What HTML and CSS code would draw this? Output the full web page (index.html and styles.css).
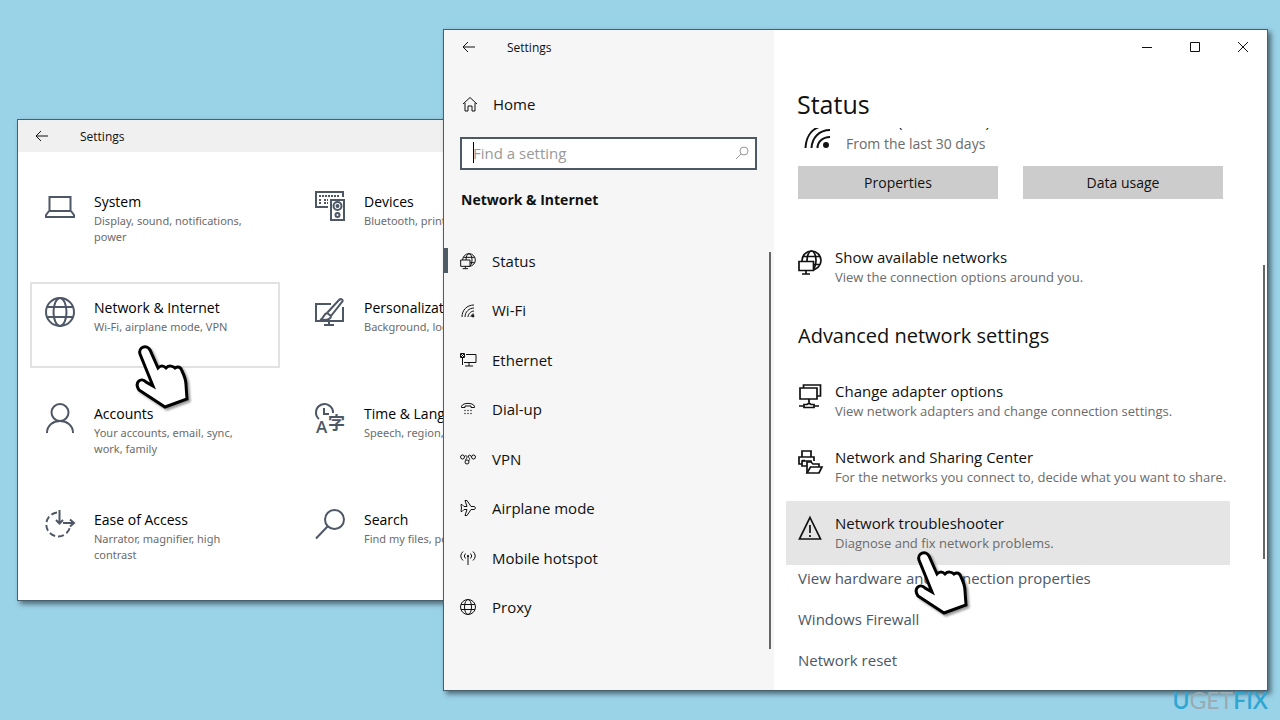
FILE: index.html
```html
<!DOCTYPE html>
<html lang="en">
  <head>
    <meta charset="utf-8">
    <title>Settings - Network troubleshooter</title>
    <link rel="stylesheet" href="styles.css">
  </head>

  <body>
    <div class="desktop">

      <!-- Settings home -->
      <section class="window window-home">
        <header class="titlebar">
          <button class="back" aria-label="Back"><svg width="14" height="12" viewBox="0 0 14 12"><path d="M13 6H1M6 1L1 6l5 5"/></svg></button>
          <span>Settings</span>
        </header>
        <div class="tiles">
          <a href="#" class="tile">
            <svg class="tile-icon" viewBox="0 0 30 30"><path d="M4.500 6h21v14h-21zM4 20l-3 4v2h28v-2l-3-4"/></svg>
            <span class="tile-text"><span class="tile-title">System</span><span class="tile-sub">Display, sound, notifications, power</span></span>
          </a>
          <a href="#" class="tile">
            <svg class="tile-icon" viewBox="0 0 30 30"><path d="M13 16H1V1h27v5M16 9h13v20H16z"/><path d="M4 5h21M4 9h3M9 9h4M4 12h3M9 12h4" stroke-dasharray="2 1"/><circle cx="22.500" cy="15" r="4"/><circle cx="22.500" cy="15" r="1"/><circle cx="22.500" cy="24" r="2"/></svg>
            <span class="tile-text"><span class="tile-title">Devices</span><span class="tile-sub">Bluetooth, printers, mouse</span></span>
          </a>
          <a href="#" class="tile tile-hover">
            <svg class="tile-icon" viewBox="0 0 30 30"><circle cx="15" cy="15" r="14"/><ellipse cx="15" cy="15" rx="6.500" ry="14"/><path d="M2 10h26M2 20h26"/></svg>
            <span class="tile-text"><span class="tile-title">Network &amp; Internet</span><span class="tile-sub">Wi-Fi, airplane mode, VPN</span></span>
            <svg class="hand hand-tile" width="58" height="70" viewBox="0 0 58 70"><path d="M18 41L5 9C3 2 12-1 15 5l8 18c3-3 6-2 8 0 3-3 7-2 9 0 3-2 6-1 7 3 2 4 4 9 4 14l1 14-22 8L4 45C-1 37 6 32 11 37z"/></svg>
          </a>
          <a href="#" class="tile">
            <svg class="tile-icon" viewBox="0 0 30 30"><path d="M16 7H1v17h27V10M14 24v4M9 28h10"/><path d="M12 16L24 3c2-2 5 0 3 2L16 19M12 16l4 3c0 4-5 4-11 4 4-1 3-6 7-7z"/></svg>
            <span class="tile-text"><span class="tile-title">Personalization</span><span class="tile-sub">Background, lock screen</span></span>
          </a>
          <a href="#" class="tile">
            <svg class="tile-icon" viewBox="0 0 30 30"><circle cx="15" cy="9.500" r="8.500"/><path d="M2 30c0-16 26-16 26 0"/></svg>
            <span class="tile-text"><span class="tile-title">Accounts</span><span class="tile-sub">Your accounts, email, sync, work, family</span></span>
          </a>
          <a href="#" class="tile">
            <svg class="tile-icon" viewBox="0 0 30 30"><path d="M4 16A8.500 8.500 0 1 1 18 10M9 5v6h5"/><text x="1" y="30" class="glyph">A</text><text x="13" y="26" class="glyph glyph-cjk">字</text></svg>
            <span class="tile-text"><span class="tile-title">Time &amp; Language</span><span class="tile-sub">Speech, region, date</span></span>
          </a>
          <a href="#" class="tile">
            <svg class="tile-icon" viewBox="0 0 30 30"><path d="M12 3.500A12 12 0 1 0 25 18" stroke-dasharray="6 3"/><path d="M14.500 1v13M11 11l3.500 3.500L18 11M18 14h11M25 10.500l4 3.500-4 3.500"/></svg>
            <span class="tile-text"><span class="tile-title">Ease of Access</span><span class="tile-sub">Narrator, magnifier, high contrast</span></span>
          </a>
          <a href="#" class="tile">
            <svg class="tile-icon" viewBox="0 0 30 30"><circle cx="19.500" cy="10.500" r="9.500"/><path d="M12.500 17.500L1 29.500"/></svg>
            <span class="tile-text"><span class="tile-title">Search</span><span class="tile-sub">Find my files, permissions</span></span>
          </a>
        </div>
      </section>

      <!-- Network & Internet -->
      <section class="window window-network">
        <aside class="sidebar">
          <header class="titlebar">
            <button class="back" aria-label="Back"><svg width="14" height="12" viewBox="0 0 14 12"><path d="M13 6H1M6 1L1 6l5 5"/></svg></button>
            <span>Settings</span>
          </header>
          <a href="#" class="home">
            <svg class="nav-icon" viewBox="0 0 16 16"><path d="M1 8l7-6.500L15 8M3 7v8h3v-5h4v5h3V7"/></svg>
            Home
          </a>
          <div class="search">
            <input type="text" class="search-input" placeholder="Find a setting" aria-label="Find a setting">
            <span class="caret"></span>
            <svg class="search-icon" width="14" height="14" viewBox="0 0 14 14"><circle cx="9" cy="5" r="4"/><path d="M6 8l-5 5"/></svg>
          </div>
          <h2 class="side-title">Network &amp; Internet</h2>
          <nav class="nav">
            <a href="#" class="nav-item active"><svg class="nav-icon globe" viewBox="0 0 24 24"><circle cx="13.500" cy="10.500" r="9.500"/><ellipse cx="13.500" cy="10.500" rx="4.500" ry="9.500"/><path d="M5 6.500h17M4 14.500h18"/><path class="solid" d="M1 10.500h14v9.500H1z"/><path d="M8 20v3M4 23.500h8"/></svg>Status</a>
            <a href="#" class="nav-item"><svg class="nav-icon" viewBox="0 0 16 16"><path d="M2 15C2 8 7 3 14 3M5 15c0-5 4-9 9-9M8 15c0-3 3-6 6-6M11 15c0-2 1-3 3-3"/><circle class="dot" cx="13" cy="14" r="1"/></svg>Wi-Fi</a>
            <a href="#" class="nav-item"><svg class="nav-icon" viewBox="0 0 16 16"><path d="M6 2.500h10v8H4M.500 1.500h4v4h-4zM2.500 6v7M9 11v3M5 14h8M1 2l3 3M4 2L1 5"/></svg>Ethernet</a>
            <a href="#" class="nav-item"><svg class="nav-icon" viewBox="0 0 16 16"><path d="M1.500 6.500c-1-5.500 14-5.500 13 0h-3.500V5H5v1.500z"/><g class="dots"><circle cx="5" cy="9.500" r=".7"/><circle cx="8" cy="9.500" r=".7"/><circle cx="11" cy="9.500" r=".7"/><circle cx="5" cy="12.500" r=".7"/><circle cx="8" cy="12.500" r=".7"/><circle cx="11" cy="12.500" r=".7"/></g></svg>Dial-up</a>
            <a href="#" class="nav-item"><svg class="nav-icon" viewBox="0 0 16 16"><circle cx="2.500" cy="6" r="2"/><circle cx="13.500" cy="6" r="2"/><circle cx="7" cy="11" r="2"/><path d="M4.500 5.500c2-2 4 0 1 3.500M11.500 6c-1-3-4-2-3 0s2 2 0 4"/></svg>VPN</a>
            <a href="#" class="nav-item"><svg class="nav-icon" viewBox="0 0 16 16"><path d="M1 4.500h1l2 2h3L5 .500h2l4 6h3.500q2 1.500 0 3H11l-4 6H5l2-6H4l-2 2H1L1.500 8z"/></svg>Airplane mode</a>
            <a href="#" class="nav-item"><svg class="nav-icon" viewBox="0 0 16 16"><path d="M3 1.500Q-1.500 6 3 10.500M5.500 3.500Q3 6 5.500 8.500M13 1.500q4.500 4.500 0 9M10.500 3.500q2.500 2.500 0 5M8 6v9"/><circle class="dot" cx="8" cy="6" r=".7"/></svg>Mobile hotspot</a>
            <a href="#" class="nav-item"><svg class="nav-icon" viewBox="0 0 16 16"><circle cx="8" cy="8" r="7.500"/><ellipse cx="8" cy="8" rx="3.500" ry="7.500"/><path d="M1 5.500h14M1 10.500h14"/></svg>Proxy</a>
          </nav>
        </aside>

        <main class="content">
          <div class="controls">
            <button aria-label="Minimize"><svg width="12" height="12" viewBox="0 0 12 12"><path d="M1 6.500h10"/></svg></button>
            <button aria-label="Maximize"><svg width="12" height="12" viewBox="0 0 12 12"><path d="M1.500 1.500h9v9h-9z"/></svg></button>
            <button aria-label="Close"><svg width="12" height="12" viewBox="0 0 12 12"><path d="M1 1l10 10M11 1L1 11"/></svg></button>
          </div>
          <div class="panel">
            <h1 class="page-title">Status</h1>
            <div class="usage">
              <svg class="usage-icon" width="26" height="26" viewBox="0 0 26 26"><path d="M1.500 23C2 14 6 5 15 2M7.500 23C8 13 15 5 26 5M13.500 23c0-6 5-11 12.500-11"/><circle class="dot" cx="22" cy="20" r="2"/></svg>
              <div>
                <div class="usage-name"><span>(</span><span>)</span></div>
                <div class="usage-period">From the last 30 days</div>
              </div>
            </div>
            <div class="actions">
              <button class="action">Properties</button>
              <button class="action">Data usage</button>
            </div>
            <a href="#" class="row row-networks">
              <svg class="row-icon" viewBox="0 0 24 24"><circle cx="13.500" cy="10.500" r="9.500"/><ellipse cx="13.500" cy="10.500" rx="4.500" ry="9.500"/><path d="M5 6.500h17M4 14.500h18"/><path class="solid" d="M1 11.500h14.500v9H1z"/><path d="M8 20.500v3M4 24h8"/></svg>
              <span><span class="row-title">Show available networks</span><span class="row-sub">View the connection options around you.</span></span>
            </a>
            <h2 class="section-title">Advanced network settings</h2>
            <div class="rows">
              <a href="#" class="row">
                <svg class="row-icon" viewBox="0 0 24 24"><path d="M5.500 4V1h17v11H19M2 4h17v11H2zM11 15v4M1 22h5M16 22h5M6 23.500v-3h3L11 19l2 1.500h3v3z"/></svg>
                <span><span class="row-title">Change adapter options</span><span class="row-sub">View network adapters and change connection settings.</span></span>
              </a>
              <a href="#" class="row">
                <svg class="row-icon" viewBox="0 0 24 24"><path d="M4 7V1h9v6M4 14H1V7h15v4M4 10.500h3"/><path d="M4 11h9v5H4z"/><path class="solid" d="M9 23V12h4l2 2h6v3"/><path class="solid" d="M9 23l3.500-6H24l-3 6z"/></svg>
                <span><span class="row-title">Network and Sharing Center</span><span class="row-sub">For the networks you connect to, decide what you want to share.</span></span>
              </a>
              <a href="#" class="row row-hover">
                <svg class="row-icon" viewBox="0 0 24 24"><path d="M12 1.500L22.500 23h-21zM12 9v8M12 19v2"/></svg>
                <span><span class="row-title">Network troubleshooter</span><span class="row-sub">Diagnose and fix network problems.</span></span>
                <svg class="hand hand-row" width="58" height="70" viewBox="0 0 58 70"><path d="M18 41L5 9C3 2 12-1 15 5l8 18c3-3 6-2 8 0 3-3 7-2 9 0 3-2 6-1 7 3 2 4 4 9 4 14l1 14-22 8L4 45C-1 37 6 32 11 37z"/></svg>
              </a>
            </div>
            <div class="links">
              <a href="#">View hardware and connection properties</a>
              <a href="#">Windows Firewall</a>
              <a href="#">Network reset</a>
            </div>
          </div>
        </main>
      </section>

      <div class="logo">U<span class="logo-mid">GET</span>FIX</div>
    </div>
  </body>
</html>
```
FILE: styles.css
```css
* {
  box-sizing: border-box;
}
body {
  margin: 0;
  font-family: "Open Sans", "Noto Sans", sans-serif;
  font-size: 14px;
  color: #111;
}
a {
  color: inherit;
  text-decoration: none;
}
h1, h2 {
  margin: 0;
  font-weight: normal;
}
button {
  padding: 0;
  border: none;
  background: none;
  font: inherit;
  color: inherit;
}
svg {
  flex: none;
  fill: none;
  stroke: #111;
  overflow: visible;
}
.dot {
  fill: #111;
}
.dots {
  fill: #111;
  stroke: none;
}

.desktop {
  position: relative;
  min-height: 100vh;
  overflow: hidden;
  background: #9ad2e7;
}
.window {
  position: absolute;
  border: 1px solid #46606e;
  background: #fff;
  box-shadow: 3px 3px 5px rgba(0, 0, 0, 0.5);
}
.window-home {
  top: 119px;
  left: 17px;
  width: 45%;
}
.window-network {
  top: 29px;
  left: 443px;
  right: 12px;
  display: grid;
  grid-template-columns: 330px 1fr;
  font-size: 15px;
}

.titlebar {
  display: flex;
  align-items: center;
  height: 34px;
  padding-left: 18px;
  font-size: 12px;
}
.window-home .titlebar {
  height: 32px;
  padding-left: 17px;
  background: #f0f0f0;
}
.back {
  display: flex;
  width: 45px;
}

/* home tiles */
.tiles {
  display: grid;
  grid-template-columns: 250px 250px;
  gap: 20px;
  padding: 24px 12px 20px;
}
.tile {
  position: relative;
  display: flex;
  gap: 19px;
  min-height: 86px;
  padding: 13px;
  border: 2px solid transparent;
}
.tile-hover {
  z-index: 1;
  border-color: #e2e2e2;
}
.tile-icon {
  width: 30px;
  height: 30px;
  stroke: #4d5765;
  stroke-width: 2;
}
.tile-text {
  width: 160px;
}
.tile-title {
  display: block;
  line-height: 22px;
  color: #000;
}
.tile-sub {
  display: block;
  font-family: "Noto Sans", sans-serif;
  font-size: 11px;
  line-height: 16px;
  color: #6b6b6b;
}
.glyph {
  fill: #4d5765;
  stroke: none;
  font-size: 17px;
  font-weight: 600;
}
.glyph-cjk {
  font-family: "Noto Sans CJK JP", sans-serif;
}

/* sidebar */
.sidebar {
  position: relative;
  background: #f6f6f6;
}
.sidebar::after {
  content: "";
  position: absolute;
  top: 222px;
  right: 3px;
  bottom: 41px;
  width: 2px;
  background: #666;
}
.home {
  display: flex;
  align-items: center;
  gap: 15px;
  height: 34px;
  margin: 23px 0 16px;
  padding-left: 18px;
}
.nav-icon {
  width: 16px;
  height: 16px;
}
.search {
  position: relative;
  margin: 0 17px 0 16px;
}
.search-input {
  display: block;
  width: 100%;
  height: 33px;
  padding: 0 40px 2px 11px;
  border: 2px solid #4d5a66;
  border-radius: 0;
  background: #fff;
  font: inherit;
}
.search-input::placeholder {
  color: #999;
  opacity: 1;
}
.caret {
  position: absolute;
  top: 5px;
  left: 13px;
  width: 1px;
  height: 21px;
  background: #000;
}
.search-icon {
  position: absolute;
  top: 9px;
  right: 8px;
  stroke: #999;
}
.side-title {
  margin: 20px 0 26px 17px;
  font-size: 14px;
  font-weight: 700;
  line-height: 20px;
}
.nav {
  display: grid;
  grid-auto-rows: 1fr;
  min-height: 396px;
}
.nav-item {
  position: relative;
  display: flex;
  align-items: center;
  gap: 16px;
  padding-left: 16px;
}
.nav-item.active::before {
  content: "";
  position: absolute;
  left: 0;
  width: 4px;
  height: 25px;
  background: #4d5a66;
}
.globe {
  stroke-width: 1.5;
}
.solid {
  fill: #fff;
}
.globe .solid {
  fill: #f6f6f6;
}

/* content */
.content {
  position: relative;
}
.content::after {
  content: "";
  position: absolute;
  top: 235px;
  right: 2px;
  width: 2px;
  height: 294px;
  background: #666;
}
.controls {
  display: flex;
  justify-content: flex-end;
  height: 34px;
}
.controls button {
  width: 48px;
}
.panel {
  padding: 23px 37px 20px 12px;
}
.page-title {
  padding-left: 11px;
  font-size: 25px;
  line-height: 34px;
}
.usage {
  display: flex;
  gap: 16px;
  margin: 7px 0 12px;
  padding-left: 18px;
  overflow: hidden;
  line-height: 20px;
}
.usage-icon {
  margin-top: -3px;
  stroke-width: 2;
}
.usage-name {
  display: flex;
  gap: 83px;
  margin: -17px 0 3px;
  padding-left: 52px;
}
.usage-period {
  font-size: 14px;
  color: #6b6b6b;
}
.actions {
  display: flex;
  gap: 25px;
  padding-left: 12px;
}
.action {
  width: 200px;
  height: 33px;
  background: #ccc;
  font-size: 14px;
}
.row {
  position: relative;
  display: flex;
  gap: 13px;
  min-height: 64px;
  padding: 12px 0 12px 12px;
}
.row-networks {
  margin-top: 36px;
}
.row-hover {
  z-index: 1;
  background: #e5e5e5;
}
.row-icon {
  width: 24px;
  height: 24px;
  margin-top: 3px;
  stroke-width: 1.7;
}
.row-title, .row-sub {
  display: block;
  line-height: 20px;
}
.row-sub {
  font-size: 13px;
  color: #6b6b6b;
}
.section-title {
  margin: 23px 0 19px;
  padding-left: 12px;
  font-size: 20px;
  line-height: 28px;
}
.rows {
  display: grid;
  gap: 2px;
}
.links {
  display: flex;
  flex-direction: column;
  align-items: flex-start;
  gap: 21px;
  margin-top: 3px;
  padding-left: 12px;
  line-height: 20px;
  color: #4d5765;
}

/* pointing hands */
.hand {
  position: absolute;
  filter: drop-shadow(2px 2px 1px rgba(0, 0, 0, 0.4));
}
.hand path {
  fill: #fff;
  stroke: #000;
  stroke-width: 3;
}
.hand-tile {
  top: 61px;
  left: 103px;
}
.hand-row {
  top: 50px;
  left: 128px;
}

.logo {
  position: absolute;
  right: 12px;
  bottom: 7px;
  font-family: Lato, sans-serif;
  font-size: 23px;
  font-weight: 600;
  line-height: 26px;
  color: #2fa5d2;
}
.logo-mid {
  font-weight: 400;
  color: #9aa9b2;
}
```
